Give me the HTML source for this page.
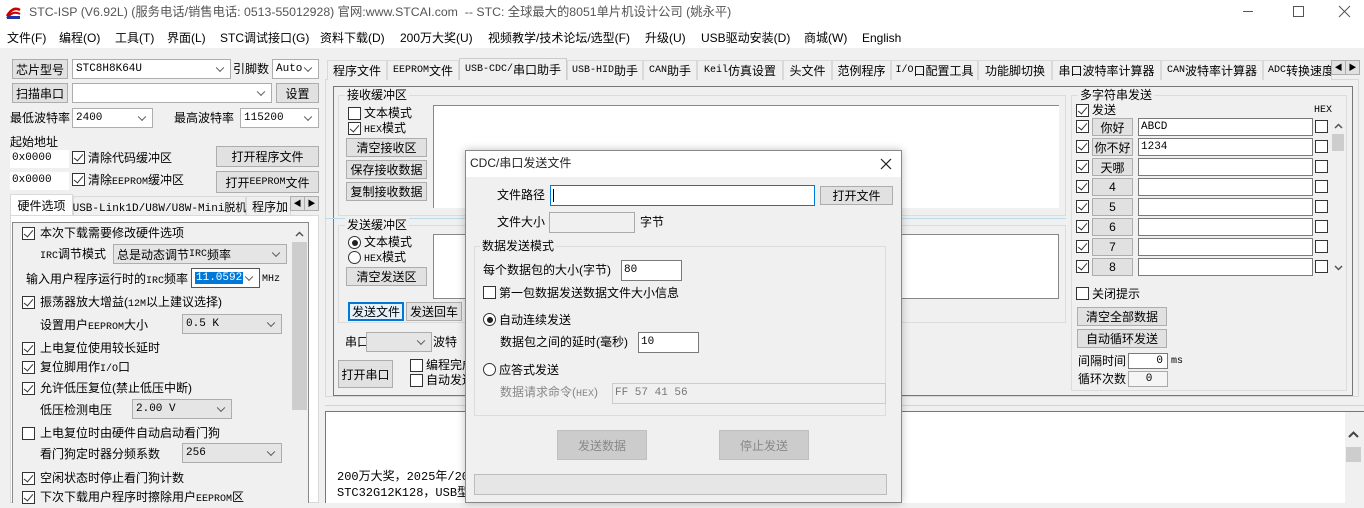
<!DOCTYPE html>
<html><head><meta charset="utf-8"><style>
*{box-sizing:border-box;margin:0;padding:0}
body{width:1364px;height:503px;overflow:hidden;background:#f0f0f0;position:relative;font-family:"Liberation Sans","Noto Sans CJK SC",sans-serif;font-size:12px;color:#000}
.a{position:absolute;white-space:nowrap;line-height:16px}
.m{font-family:"Liberation Mono","Noto Sans CJK SC",monospace;font-size:11px}
.a .m,.btn .m,.sel .m,.tab .m{font-size:10px}
.btn{position:absolute;background:#e1e1e1;border:1px solid #adadad;text-align:center;white-space:nowrap;display:flex;align-items:center;justify-content:center}
.in{position:absolute;background:#fff;border:1px solid #7a7a7a;white-space:nowrap;padding-left:2px;line-height:16px;overflow:hidden}
.sel{position:absolute;background:#fff;border:1px solid #adadad;white-space:nowrap;padding-left:3px;display:flex;align-items:center;overflow:hidden}
.sel.g{background:#e5e5e5}
.sel::after{content:"";position:absolute;right:7px;top:50%;width:5px;height:5px;border-right:1px solid #555;border-bottom:1px solid #555;transform:translateY(-70%) rotate(45deg)}
.cb{position:absolute;width:13px;height:13px;border:1px solid #333;background:#fff}
.cb.on::after{content:"";position:absolute;left:3px;top:0px;width:4px;height:8px;border-right:1.3px solid #333;border-bottom:1.3px solid #333;transform:rotate(40deg)}
.rd{position:absolute;width:13px;height:13px;border:1px solid #333;border-radius:50%;background:#fff}
.rd.on::after{content:"";position:absolute;left:2.5px;top:2.5px;width:6px;height:6px;border-radius:50%;background:#222}
.box{position:absolute;border:1px solid #dcdcdc}
.tab{position:absolute;top:60px;height:20px;border:1px solid #d9d9d9;border-bottom:none;background:#f0f0f0;display:flex;align-items:center;justify-content:center;white-space:nowrap}
.w{position:absolute;background:#fff}
.mn{position:absolute;top:30px;font-size:12px;line-height:16px;white-space:nowrap}
</style></head><body>
<!-- title -->
<div class="w" style="left:0;top:0;width:1364px;height:48px"></div>
<svg class="a" style="left:5px;top:4px" width="16" height="16" viewBox="0 0 16 16"><path d="M2 12 Q8 2 15 6" stroke="#c00" stroke-width="2.5" fill="none"/><path d="M2 14 Q8 6 15 10" stroke="#c00" stroke-width="2" fill="none"/><rect x="2" y="12" width="13" height="3" fill="#23a"/></svg>
<div class="a" style="left:29px;top:4px;font-size:12.3px;color:#555">STC-ISP (V6.92L) (服务电话/销售电话: 0513-55012928) 官网:www.STCAI.com &nbsp;-- STC: 全球最大的8051单片机设计公司 (姚永平)</div>
<div class="a" style="left:1243px;top:11px;width:10px;border-top:1px solid #555"></div>
<div class="a" style="left:1293px;top:6px;width:11px;height:11px;border:1px solid #555"></div>
<svg class="a" style="left:1338px;top:5px" width="13" height="13"><path d="M1 1L12 12M12 1L1 12" stroke="#555"/></svg>
<div class="mn" style="left:7px">文件(F)</div>
<div class="mn" style="left:59px">编程(O)</div>
<div class="mn" style="left:115px">工具(T)</div>
<div class="mn" style="left:167px">界面(L)</div>
<div class="mn" style="left:220px">STC调试接口(G)</div>
<div class="mn" style="left:320px">资料下载(D)</div>
<div class="mn" style="left:400px">200万大奖(U)</div>
<div class="mn" style="left:488px">视频教学/技术论坛/选型(F)</div>
<div class="mn" style="left:645px">升级(U)</div>
<div class="mn" style="left:701px">USB驱动安装(D)</div>
<div class="mn" style="left:804px">商城(W)</div>
<div class="mn" style="left:862px">English</div>

<!-- left top -->
<div class="btn" style="left:12px;top:59px;width:56px;height:20px">芯片型号</div>
<div class="sel m" style="left:72px;top:59px;width:159px;height:20px">STC8H8K64U</div>
<div class="a" style="left:233px;top:61px">引脚数</div>
<div class="sel m" style="left:272px;top:59px;width:47px;height:20px">Auto</div>
<div class="btn" style="left:12px;top:83px;width:56px;height:20px">扫描串口</div>
<div class="sel" style="left:72px;top:83px;width:200px;height:20px"></div>
<div class="btn" style="left:276px;top:83px;width:43px;height:20px">设置</div>
<div class="a" style="left:10px;top:110px">最低波特率</div>
<div class="sel m" style="left:72px;top:108px;width:81px;height:20px">2400</div>
<div class="a" style="left:174px;top:110px">最高波特率</div>
<div class="sel m" style="left:240px;top:108px;width:79px;height:20px">115200</div>
<div class="a" style="left:10px;top:134px">起始地址</div>
<div class="in m" style="left:10px;top:150px;width:59px;height:18px;border:none">0x0000</div>
<div class="cb on" style="left:72px;top:151px"></div><div class="a" style="left:88px;top:150px">清除代码缓冲区</div>
<div class="btn" style="left:216px;top:146px;width:103px;height:21px">打开程序文件</div>
<div class="in m" style="left:10px;top:172px;width:59px;height:18px;border:none">0x0000</div>
<div class="cb on" style="left:72px;top:173px"></div><div class="a" style="left:88px;top:172px">清除<span class="m">EEPROM</span>缓冲区</div>
<div class="btn" style="left:216px;top:171px;width:103px;height:22px">打开<span class="m">EEPROM</span>文件</div>
<div class="tab" style="left:10px;top:194px;width:63px;height:22px;background:#fff">硬件选项</div>
<div class="tab m" style="left:73px;top:196px;width:173px">USB-Link1D/U8W/U8W-Mini脱机</div>
<div class="tab" style="left:246px;top:196px;width:45px;overflow:hidden;justify-content:flex-start;padding-left:5px">程序加</div>
<div class="btn" style="left:290px;top:196px;width:15px;height:15px;font-size:8px">◀</div>
<div class="btn" style="left:304px;top:196px;width:15px;height:15px;font-size:8px">▶</div>
<div class="w" style="left:10px;top:215px;width:309px;height:288px;border:1px solid #d9d9d9"></div>
<div class="a" style="left:12px;top:222px;width:297px;height:281px;border:1px solid #888;border-bottom:none;background:#f0f0f0"></div>
<div class="a" style="left:291px;top:223px;width:17px;height:280px;background:#f0f0f0"></div>
<svg class="a" style="left:295px;top:231px" width="9" height="6"><path d="M1 5L4.5 1.5L8 5" stroke="#555" stroke-width="1.5" fill="none"/></svg>
<div class="a" style="left:292px;top:242px;width:15px;height:168px;background:#cdcdcd"></div>
<div class="cb on" style="left:22px;top:227px"></div><div class="a" style="left:40px;top:225px">本次下载需要修改硬件选项</div>
<div class="a" style="left:40px;top:246px"><span class="m">IRC</span>调节模式</div>
<div class="sel g" style="left:113px;top:244px;width:174px;height:20px">总是动态调节<span class="m">IRC</span>频率</div>
<div class="a" style="left:26px;top:271px">输入用户程序运行时的<span class="m">IRC</span>频率</div>
<div class="sel" style="left:191px;top:268px;width:69px;height:20px;border-color:#555"><span class="m" style="background:#0078d7;color:#fff;padding:0 1px;font-size:11px">11.0592</span></div>
<div class="a m" style="left:262px;top:272px;font-size:10px">MHz</div>
<div class="cb on" style="left:22px;top:296px"></div><div class="a" style="left:40px;top:294px">振荡器放大增益(<span class="m">12M</span>以上建议选择)</div>
<div class="a" style="left:40px;top:317px">设置用户<span class="m">EEPROM</span>大小</div>
<div class="sel g m" style="left:182px;top:314px;width:100px;height:20px">0.5 K</div>
<div class="cb on" style="left:22px;top:342px"></div><div class="a" style="left:40px;top:340px">上电复位使用较长延时</div>
<div class="cb on" style="left:22px;top:361px"></div><div class="a" style="left:40px;top:359px">复位脚用作<span class="m">I/O</span>口</div>
<div class="cb on" style="left:22px;top:382px"></div><div class="a" style="left:40px;top:380px">允许低压复位(禁止低压中断)</div>
<div class="a" style="left:40px;top:402px">低压检测电压</div>
<div class="sel g m" style="left:132px;top:399px;width:100px;height:20px">2.00 V</div>
<div class="cb" style="left:22px;top:427px"></div><div class="a" style="left:40px;top:425px">上电复位时由硬件自动启动看门狗</div>
<div class="a" style="left:40px;top:446px">看门狗定时器分频系数</div>
<div class="sel g m" style="left:182px;top:443px;width:100px;height:20px">256</div>
<div class="cb on" style="left:22px;top:472px"></div><div class="a" style="left:40px;top:470px">空闲状态时停止看门狗计数</div>
<div class="cb on" style="left:22px;top:491px"></div><div class="a" style="left:40px;top:489px">下次下载用户程序时擦除用户<span class="m">EEPROM</span>区</div>

<!-- right tabs -->
<div class="w" style="left:325px;top:79px;width:1034px;height:318px;background:#f0f0f0;border:1px solid #d9d9d9"></div>
<div class="tab" style="left:327px;width:60px">程序文件</div>
<div class="tab" style="left:387px;width:72px"><span class="m">EEPROM</span>文件</div>
<div class="tab" style="left:459px;top:58px;height:22px;width:108px;background:#f0f0f0;border-color:#ccc"><span class="m">USB-CDC/</span>串口助手</div>
<div class="tab" style="left:567px;width:76px"><span class="m">USB-HID</span>助手</div>
<div class="tab" style="left:643px;width:54px"><span class="m">CAN</span>助手</div>
<div class="tab" style="left:697px;width:86px"><span class="m">Keil</span>仿真设置</div>
<div class="tab" style="left:783px;width:49px">头文件</div>
<div class="tab" style="left:832px;width:59px">范例程序</div>
<div class="tab" style="left:891px;width:87px"><span class="m">I/O</span>口配置工具</div>
<div class="tab" style="left:978px;width:74px">功能脚切换</div>
<div class="tab" style="left:1052px;width:109px">串口波特率计算器</div>
<div class="tab" style="left:1161px;width:102px"><span class="m">CAN</span>波特率计算器</div>
<div class="tab" style="left:1263px;width:69px;overflow:hidden;justify-content:flex-start;padding-left:4px"><span class="m">ADC</span>转换速度</div>
<div class="btn" style="left:1331px;top:60px;width:15px;height:15px;font-size:8px">◀</div>
<div class="btn" style="left:1345px;top:60px;width:15px;height:15px;font-size:8px">▶</div>
<div class="a" style="left:333px;top:86px;width:1020px;height:310px;border:1px solid #777"></div>

<!-- receive -->
<div class="box" style="left:338px;top:95px;width:728px;height:121px"></div>
<div class="a" style="left:345px;top:87px;background:#f0f0f0;padding:0 2px">接收缓冲区</div>
<div class="cb" style="left:348px;top:107px"></div><div class="a" style="left:364px;top:105px">文本模式</div>
<div class="cb on" style="left:348px;top:122px"></div><div class="a" style="left:364px;top:120px"><span class="m">HEX</span>模式</div>
<div class="btn" style="left:346px;top:138px;width:81px;height:19px">清空接收区</div>
<div class="btn" style="left:346px;top:160px;width:81px;height:19px">保存接收数据</div>
<div class="btn" style="left:346px;top:182px;width:81px;height:19px">复制接收数据</div>
<div class="w" style="left:433px;top:105px;width:626px;height:103px;border-top:1px solid #888;border-left:1px solid #888"></div>
<div class="a" style="left:325px;top:218px;width:741px;border-top:1px solid #bcd9ea"></div>
<!-- send -->
<div class="box" style="left:338px;top:225px;width:728px;height:98px"></div>
<div class="a" style="left:345px;top:217px;background:#f0f0f0;padding:0 2px">发送缓冲区</div>
<div class="rd on" style="left:348px;top:236px"></div><div class="a" style="left:364px;top:234px">文本模式</div>
<div class="rd" style="left:348px;top:251px"></div><div class="a" style="left:364px;top:249px"><span class="m">HEX</span>模式</div>
<div class="btn" style="left:346px;top:267px;width:81px;height:19px">清空发送区</div>
<div class="w" style="left:433px;top:234px;width:626px;height:65px;border:1px solid #888"></div>
<div class="btn" style="left:348px;top:302px;width:56px;height:19px;border:2px solid #0078d7;background:#e5f1fb">发送文件</div>
<div class="btn" style="left:406px;top:302px;width:56px;height:19px">发送回车</div>
<div class="a" style="left:345px;top:334px">串口</div>
<div class="sel g" style="left:366px;top:332px;width:66px;height:20px"></div>
<div class="a" style="left:433px;top:334px">波特</div>
<div class="btn" style="left:338px;top:360px;width:55px;height:28px">打开串口</div>
<div class="cb" style="left:410px;top:359px"></div><div class="a" style="left:426px;top:357px">编程完成</div>
<div class="cb" style="left:410px;top:374px"></div><div class="a" style="left:426px;top:372px">自动发送</div>

<!-- multi string -->
<div class="box" style="left:1071px;top:95px;width:276px;height:296px"></div>
<div class="a" style="left:1078px;top:87px;background:#f0f0f0;padding:0 2px">多字符串发送</div>
<div class="cb on" style="left:1076px;top:104px"></div><div class="a" style="left:1092px;top:102px">发送</div>
<div class="a m" style="left:1314px;top:103px;font-size:10px">HEX</div>
<div class="cb on" style="left:1076px;top:120px"></div><div class="btn" style="left:1092px;top:118px;width:41px;height:18px">你好</div><div class="in m" style="left:1138px;top:118px;width:175px;height:18px">ABCD</div><div class="cb" style="left:1315px;top:120px"></div>
<div class="cb on" style="left:1076px;top:140px"></div><div class="btn" style="left:1092px;top:138px;width:41px;height:18px">你不好</div><div class="in m" style="left:1138px;top:138px;width:175px;height:18px">1234</div><div class="cb" style="left:1315px;top:140px"></div>
<div class="cb on" style="left:1076px;top:160px"></div><div class="btn" style="left:1092px;top:158px;width:41px;height:18px">天哪</div><div class="in" style="left:1138px;top:158px;width:175px;height:18px"></div><div class="cb" style="left:1315px;top:160px"></div>
<div class="cb on" style="left:1076px;top:180px"></div><div class="btn" style="left:1092px;top:178px;width:41px;height:18px">4</div><div class="in" style="left:1138px;top:178px;width:175px;height:18px"></div><div class="cb" style="left:1315px;top:180px"></div>
<div class="cb on" style="left:1076px;top:200px"></div><div class="btn" style="left:1092px;top:198px;width:41px;height:18px">5</div><div class="in" style="left:1138px;top:198px;width:175px;height:18px"></div><div class="cb" style="left:1315px;top:200px"></div>
<div class="cb on" style="left:1076px;top:220px"></div><div class="btn" style="left:1092px;top:218px;width:41px;height:18px">6</div><div class="in" style="left:1138px;top:218px;width:175px;height:18px"></div><div class="cb" style="left:1315px;top:220px"></div>
<div class="cb on" style="left:1076px;top:240px"></div><div class="btn" style="left:1092px;top:238px;width:41px;height:18px">7</div><div class="in" style="left:1138px;top:238px;width:175px;height:18px"></div><div class="cb" style="left:1315px;top:240px"></div>
<div class="cb on" style="left:1076px;top:260px"></div><div class="btn" style="left:1092px;top:258px;width:41px;height:18px">8</div><div class="in" style="left:1138px;top:258px;width:175px;height:18px"></div><div class="cb" style="left:1315px;top:260px"></div>
<svg class="a" style="left:1334px;top:123px" width="9" height="6"><path d="M1 5L4.5 1.5L8 5" stroke="#555" stroke-width="1.5" fill="none"/></svg>
<div class="a" style="left:1332px;top:134px;width:12px;height:17px;background:#cdcdcd"></div>
<svg class="a" style="left:1334px;top:265px" width="9" height="6"><path d="M1 1L4.5 4.5L8 1" stroke="#555" stroke-width="1.5" fill="none"/></svg>
<div class="cb" style="left:1076px;top:287px"></div><div class="a" style="left:1092px;top:286px">关闭提示</div>
<div class="btn" style="left:1077px;top:307px;width:90px;height:19px">清空全部数据</div>
<div class="btn" style="left:1077px;top:329px;width:90px;height:19px">自动循环发送</div>
<div class="a" style="left:1078px;top:353px">间隔时间</div>
<div class="in m" style="left:1128px;top:353px;width:40px;height:16px;text-align:right;padding-right:4px;line-height:14px">0</div>
<div class="a m" style="left:1171px;top:354px;font-size:10px">ms</div>
<div class="a" style="left:1078px;top:371px">循环次数</div>
<div class="in m" style="left:1128px;top:371px;width:40px;height:16px;text-align:center;line-height:14px;border-color:#aaa;background:#f5f5f5">0</div>

<!-- output -->
<div class="a" style="left:325px;top:405px;width:1039px;border-top:1px solid #bcd9ea"></div>
<div class="w" style="left:325px;top:411px;width:1039px;height:92px;border-top:1px solid #777;border-left:1px solid #777"></div>
<div class="a" style="left:1345px;top:412px;width:19px;height:91px;background:#f0f0f0"></div>
<svg class="a" style="left:1348px;top:431px" width="11" height="7"><path d="M1 6L5.5 1.5L10 6" stroke="#444" stroke-width="2" fill="none"/></svg>
<div class="a" style="left:1346px;top:447px;width:15px;height:15px;background:#cdcdcd"></div>
<div class="a m" style="left:337px;top:469px;font-size:12px">200万大奖，2025年/2025年</div>
<div class="a m" style="left:337px;top:485px;font-size:12px">STC32G12K128，USB型</div>

<!-- dialog -->
<div class="a" style="left:465px;top:150px;width:437px;height:353px;background:#f0f0f0;border:1px solid #888;box-shadow:0 0 8px rgba(0,0,0,.25)"></div>
<div class="w" style="left:466px;top:151px;width:435px;height:26px"></div>
<div class="a" style="left:470px;top:155px;color:#222">CDC/串口发送文件</div>
<svg class="a" style="left:880px;top:158px" width="12" height="12"><path d="M1 1L11 11M11 1L1 11" stroke="#222" stroke-width="1.2"/></svg>
<div class="a" style="left:497px;top:187px">文件路径</div>
<div class="in" style="left:550px;top:185px;width:265px;height:21px;border-color:#0078d7"><span style="display:inline-block;width:1px;height:13px;background:#000;margin-top:3px"></span></div>
<div class="btn" style="left:820px;top:186px;width:73px;height:19px">打开文件</div>
<div class="a" style="left:497px;top:214px">文件大小</div>
<div class="in" style="left:549px;top:212px;width:86px;height:21px;background:#f0f0f0;border-color:#aaa"></div>
<div class="a" style="left:640px;top:214px">字节</div>
<div class="box" style="left:474px;top:246px;width:412px;height:170px"></div>
<div class="a" style="left:480px;top:238px;background:#f0f0f0;padding:0 2px">数据发送模式</div>
<div class="a" style="left:483px;top:262px">每个数据包的大小(字节)</div>
<div class="in m" style="left:621px;top:260px;width:61px;height:21px;line-height:18px">80</div>
<div class="cb" style="left:483px;top:286px"></div><div class="a" style="left:499px;top:285px">第一包数据发送数据文件大小信息</div>
<div class="rd on" style="left:483px;top:313px"></div><div class="a" style="left:499px;top:312px">自动连续发送</div>
<div class="a" style="left:500px;top:334px">数据包之间的延时(毫秒)</div>
<div class="in m" style="left:638px;top:332px;width:61px;height:21px;line-height:18px">10</div>
<div class="rd" style="left:483px;top:363px"></div><div class="a" style="left:499px;top:362px">应答式发送</div>
<div class="a" style="left:500px;top:384px;color:#888">数据请求命令(<span class="m">HEX</span>)</div>
<div class="in m" style="left:612px;top:383px;width:274px;height:21px;line-height:18px;background:#f0f0f0;border-color:#ccc;color:#777">FF 57 41 56</div>
<div class="btn" style="left:557px;top:430px;width:90px;height:30px;color:#888;background:#ccc;border-color:#bfbfbf">发送数据</div>
<div class="btn" style="left:719px;top:430px;width:90px;height:30px;color:#888;background:#ccc;border-color:#bfbfbf">停止发送</div>
<div class="a" style="left:474px;top:474px;width:413px;height:21px;background:#e6e6e6;border:1px solid #bcbcbc"></div>
</body></html>
